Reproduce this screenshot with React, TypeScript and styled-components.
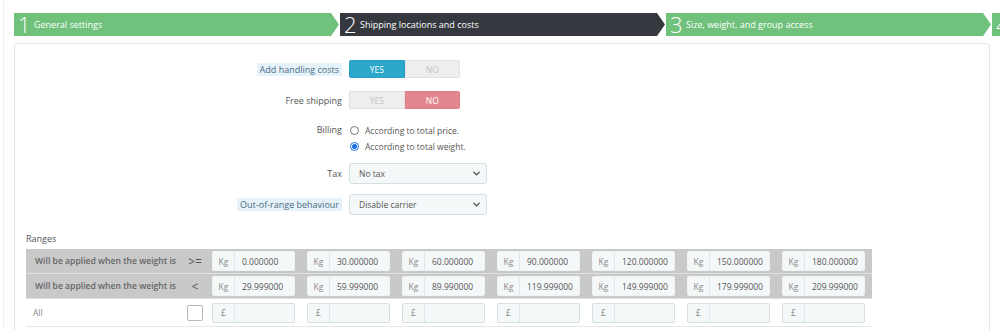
import styled, { createGlobalStyle } from 'styled-components';

const GlobalStyle = createGlobalStyle`
  html, body {
    margin: 0;
    padding: 0;
    background: #ffffff;
    overflow: hidden;
  }
  body {
    font-family: "Open Sans", "Liberation Sans", sans-serif;
    color: #555;
  }
`;

type StepState = 'done' | 'current';

interface Step {
  num: number;
  label?: string;
  state: StepState;
}

// the fourth step is only peeking in at the right edge
const steps: Step[] = [
  { num: 1, label: 'General settings', state: 'done' },
  { num: 2, label: 'Shipping locations and costs', state: 'current' },
  { num: 3, label: 'Size, weight, and group access', state: 'done' },
  { num: 4, state: 'done' },
];

const lowerBounds = ['0.000000', '30.000000', '60.000000', '90.000000', '120.000000', '150.000000', '180.000000'];
const upperBounds = ['29.999000', '59.999000', '89.990000', '119.999000', '149.999000', '179.999000', '209.999000'];

const App = () => {
  return (
    <>
      <GlobalStyle />
      <Page>
        <Wizard>
          {steps.map((s) => (
            <StepItem key={s.num} $state={s.state}>
              <StepNum>{s.num}</StepNum>
              {s.label && <StepLabel>{s.label}</StepLabel>}
            </StepItem>
          ))}
        </Wizard>

        <Panel>
          <FormGroup $gap={13}>
            <LabelCell>
              <HintLabel>Add handling costs</HintLabel>
            </LabelCell>
            <Switch>
              <SwitchHalf $on $tone="blue">YES</SwitchHalf>
              <SwitchHalf>NO</SwitchHalf>
            </Switch>
          </FormGroup>

          <FormGroup $gap={13}>
            <LabelCell>Free shipping</LabelCell>
            <Switch>
              <SwitchHalf>YES</SwitchHalf>
              <SwitchHalf $on $tone="red">NO</SwitchHalf>
            </Switch>
          </FormGroup>

          <FormGroup $gap={9} $align="start">
            <LabelCell $line>Billing</LabelCell>
            <RadioList>
              <RadioRow>
                <Radio />
                According to total price.
              </RadioRow>
              <RadioRow>
                <Radio $checked />
                According to total weight.
              </RadioRow>
            </RadioList>
          </FormGroup>

          <FormGroup $gap={10}>
            <LabelCell>Tax</LabelCell>
            <Select>
              <span>No tax</span>
              <Chevron />
            </Select>
          </FormGroup>

          <FormGroup $gap={17}>
            <LabelCell>
              <HintLabel>Out-of-range behaviour</HintLabel>
            </LabelCell>
            <Select>
              <span>Disable carrier</span>
              <Chevron />
            </Select>
          </FormGroup>

          <RangesTitle>Ranges</RangesTitle>
          <RangeTable>
            <RangeRow $shaded>
              <RowLabel $bold>Will be applied when the weight is</RowLabel>
              <Operator>&gt;=</Operator>
              {lowerBounds.map((v) => (
                <Cell key={v}>
                  <InputGroup>
                    <Addon>Kg</Addon>
                    <Field>{v}</Field>
                  </InputGroup>
                </Cell>
              ))}
            </RangeRow>
            <RangeRow $shaded>
              <RowLabel $bold>Will be applied when the weight is</RowLabel>
              <Operator>&lt;</Operator>
              {upperBounds.map((v) => (
                <Cell key={v}>
                  <InputGroup>
                    <Addon>Kg</Addon>
                    <Field>{v}</Field>
                  </InputGroup>
                </Cell>
              ))}
            </RangeRow>
            <RangeRow $last>
              <RowLabel>All</RowLabel>
              <Operator>
                <CheckBox />
              </Operator>
              {lowerBounds.map((v) => (
                <Cell key={v}>
                  <InputGroup $bordered>
                    <Addon>£</Addon>
                    <Field />
                  </InputGroup>
                </Cell>
              ))}
            </RangeRow>
          </RangeTable>
        </Panel>
      </Page>
    </>
  );
};

const Chevron = () => (
  <ChevronSvg viewBox="0 0 10 6">
    <path d="M1 1 L5 5 L9 1" fill="none" stroke="#444" strokeWidth="1.8" strokeLinecap="round" strokeLinejoin="round" />
  </ChevronSvg>
);

const Page = styled.div`
  margin-left: 3px;
  border-left: 1px solid #f0f0f0;
  padding: 13px 0 0 10px;
  width: 1100px;
  min-height: 330px;
`;

const Wizard = styled.div`
  display: flex;
  height: 23px;
`;

const StepItem = styled.div<{ $state: StepState }>`
  flex: 0 0 326px;
  display: flex;
  align-items: center;
  background: ${(p) => (p.$state === 'current' ? '#35383e' : '#6fc17b')};
  color: #ffffff;
  clip-path: polygon(0 0, calc(100% - 9px) 0, calc(100% - 1px) 50%, calc(100% - 9px) 100%, 0 100%);
  padding-left: 4px;
  box-sizing: border-box;
`;

const StepNum = styled.span`
  font-size: 22px;
  font-weight: 300;
  line-height: 23px;
  width: 15px;
  margin-right: 1px;
`;

const StepLabel = styled.span`
  font-size: 9px;
  line-height: 23px;
`;

const Panel = styled.div`
  margin-top: 7px;
  width: 976px;
  box-sizing: border-box;
  border: 1px solid #e4e4e4;
  border-radius: 3px;
  padding: 16px 11px 0;
  min-height: 300px;
`;

const FormGroup = styled.div<{ $gap: number; $align?: 'start' }>`
  display: grid;
  grid-template-columns: 316px 1fr;
  column-gap: 7px;
  align-items: ${(p) => (p.$align === 'start' ? 'start' : 'center')};
  margin-bottom: ${(p) => p.$gap}px;
`;

const LabelCell = styled.div<{ $line?: boolean }>`
  text-align: right;
  font-size: 9px;
  color: #555;
  line-height: ${(p) => (p.$line ? '16px' : '13px')};
`;

const HintLabel = styled.span`
  display: inline-block;
  background: #e6f2f9;
  color: #4b6d84;
  padding: 0 3px;
  line-height: 13px;
`;

const Switch = styled.div`
  display: flex;
  width: 111px;
  height: 18px;
`;

const SwitchHalf = styled.div<{ $on?: boolean; $tone?: 'blue' | 'red' }>`
  flex: 1;
  display: flex;
  align-items: center;
  justify-content: center;
  font-size: 8.5px;
  background: ${(p) => (!p.$on ? '#eeeeee' : p.$tone === 'red' ? '#e3878e' : '#2ba7cc')};
  color: ${(p) => (p.$on ? '#ffffff' : '#c4c4c4')};
  border: 1px solid ${(p) => (!p.$on ? '#e2e2e2' : p.$tone === 'red' ? '#dd7f86' : '#2a9fc3')};
  box-sizing: border-box;
  &:first-child {
    border-radius: 2px 0 0 2px;
  }
  &:last-child {
    border-radius: 0 2px 2px 0;
  }
`;

const RadioList = styled.div`
  display: flex;
  flex-direction: column;
`;

const RadioRow = styled.div`
  display: flex;
  align-items: center;
  height: 16px;
  font-size: 8.5px;
  color: #555;
  padding-left: 1px;
`;

const Radio = styled.span<{ $checked?: boolean }>`
  width: 9px;
  height: 9px;
  border-radius: 50%;
  box-sizing: border-box;
  margin-right: 6px;
  border: 1px solid ${(p) => (p.$checked ? '#1a73e8' : '#767676')};
  background: ${(p) => (p.$checked ? 'radial-gradient(circle, #1a73e8 0 2.2px, #ffffff 2.6px 100%)' : '#ffffff')};
`;

const Select = styled.div`
  width: 138px;
  height: 21px;
  box-sizing: border-box;
  display: flex;
  align-items: center;
  justify-content: space-between;
  padding: 0 6px 0 9px;
  background: #f5f8f9;
  border: 1px solid #d3dfe3;
  border-radius: 3px;
  font-size: 8.5px;
  color: #555;
`;

const ChevronSvg = styled.svg`
  width: 7px;
  height: 5px;
`;

const RangesTitle = styled.div`
  font-size: 9px;
  color: #555;
  line-height: 13px;
  margin-bottom: 4px;
`;

const RangeTable = styled.div`
  display: flex;
  flex-direction: column;
  width: 846px;
`;

const RangeRow = styled.div<{ $shaded?: boolean; $last?: boolean }>`
  display: grid;
  grid-template-columns: 154px 30px repeat(6, 95px) 92px;
  align-items: center;
  height: ${(p) => (p.$last ? '27px' : '24px')};
  background: ${(p) => (p.$shaded ? '#c9c9c9' : '#ffffff')};
  border-bottom: 1px solid ${(p) => (p.$shaded ? '#e0e0e0' : '#e6e6e6')};
  box-sizing: content-box;
`;

const RowLabel = styled.div<{ $bold?: boolean }>`
  padding-left: ${(p) => (p.$bold ? '9px' : '7px')};
  font-size: ${(p) => (p.$bold ? '8.6px' : '8.5px')};
  font-weight: ${(p) => (p.$bold ? 600 : 400)};
  color: ${(p) => (p.$bold ? '#666' : '#888')};
  white-space: nowrap;
`;

const Operator = styled.div`
  display: flex;
  justify-content: center;
  align-items: center;
  font-size: 12px;
  color: #555;
`;

const CheckBox = styled.span`
  width: 16px;
  height: 16px;
  box-sizing: border-box;
  border: 1px solid #b8b8b8;
  border-radius: 2px;
  background: #ffffff;
`;

const Cell = styled.div`
  padding-left: 2px;
`;

const InputGroup = styled.div<{ $bordered?: boolean }>`
  display: flex;
  width: 83px;
  height: 20px;
  box-sizing: border-box;
  background: #f5f8f9;
  border: 1px solid ${(p) => (p.$bordered ? '#d6e0e3' : '#eef3f5')};
  border-radius: 2px;
  font-size: 8.5px;
`;

const Addon = styled.span`
  flex: 0 0 21px;
  display: flex;
  align-items: center;
  justify-content: center;
  color: #888;
  border-right: 1px solid #dfe7ea;
`;

const Field = styled.span`
  flex: 1;
  display: flex;
  align-items: center;
  padding-left: 7px;
  color: #555;
`;

export default App;
